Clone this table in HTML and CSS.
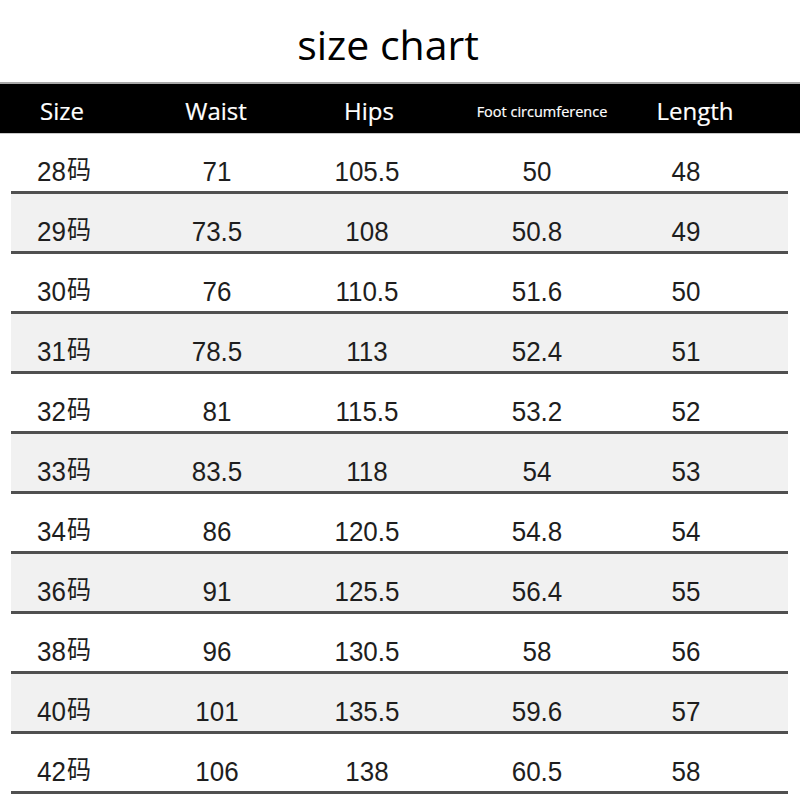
FILE: index.html
```html
<!DOCTYPE html>
<html>
<head>
<meta charset="utf-8">
<link rel="stylesheet" href="styles.css">
</head>
<body>
<div class="page">
  <h1 class="title">size chart</h1>
  <div class="head">
    <div class="hc first">Size</div>
    <div class="hc">Waist</div>
    <div class="hc">Hips</div>
    <div class="hc small">Foot circumference</div>
    <div class="hc">Length</div>
  </div>
  <div class="rows">
    <div class="row"><div class="c first">28<span class="ma">码</span></div><div class="c">71</div><div class="c">105.5</div><div class="c">50</div><div class="c">48</div></div>
    <div class="row alt"><div class="c first">29<span class="ma">码</span></div><div class="c">73.5</div><div class="c">108</div><div class="c">50.8</div><div class="c">49</div></div>
    <div class="row"><div class="c first">30<span class="ma">码</span></div><div class="c">76</div><div class="c">110.5</div><div class="c">51.6</div><div class="c">50</div></div>
    <div class="row alt"><div class="c first">31<span class="ma">码</span></div><div class="c">78.5</div><div class="c">113</div><div class="c">52.4</div><div class="c">51</div></div>
    <div class="row"><div class="c first">32<span class="ma">码</span></div><div class="c">81</div><div class="c">115.5</div><div class="c">53.2</div><div class="c">52</div></div>
    <div class="row alt"><div class="c first">33<span class="ma">码</span></div><div class="c">83.5</div><div class="c">118</div><div class="c">54</div><div class="c">53</div></div>
    <div class="row"><div class="c first">34<span class="ma">码</span></div><div class="c">86</div><div class="c">120.5</div><div class="c">54.8</div><div class="c">54</div></div>
    <div class="row alt"><div class="c first">36<span class="ma">码</span></div><div class="c">91</div><div class="c">125.5</div><div class="c">56.4</div><div class="c">55</div></div>
    <div class="row"><div class="c first">38<span class="ma">码</span></div><div class="c">96</div><div class="c">130.5</div><div class="c">58</div><div class="c">56</div></div>
    <div class="row alt"><div class="c first">40<span class="ma">码</span></div><div class="c">101</div><div class="c">135.5</div><div class="c">59.6</div><div class="c">57</div></div>
    <div class="row"><div class="c first">42<span class="ma">码</span></div><div class="c">106</div><div class="c">138</div><div class="c">60.5</div><div class="c">58</div></div>
  </div>
</div>
</body>
</html>
```

FILE: styles.css
```css
html, body {
  margin: 0;
  padding: 0;
  background: #ffffff;
}

.page {
  width: 800px;
  height: 800px;
  overflow: hidden;
  display: flex;
  flex-direction: column;
}

.title {
  margin: 0;
  height: 82px;
  box-sizing: border-box;
  padding: 16px 24px 0 0;
  text-align: center;
  font-family: "Open Sans", "Noto Sans", sans-serif;
  font-weight: 400;
  font-size: 41px;
  line-height: 56px;
  color: #000;
}

.head {
  height: 52px;
  box-sizing: border-box;
  background: #000;
  border-top: 2px solid #a8a8a8;
  border-bottom: 1px solid #c8c8c8;
  display: grid;
  grid-template-columns: 131px 148px 158px 188px 118px 1fr;
  padding-left: 11px;
  align-items: center;
  font-family: "Open Sans", "Noto Sans", sans-serif;
  color: #fff;
}

.hc {
  font-size: 24px;
  text-align: center;
  padding-top: 4px;
  -webkit-text-stroke: 0.2px #fff;
}

.hc.first {
  text-align: left;
  padding-left: 29px;
}

.hc.small {
  font-size: 14.5px;
  padding-top: 6px;
}

.rows {
  display: flex;
  flex-direction: column;
  padding: 0 12px 0 11px;
}

.row {
  height: 60px;
  box-sizing: border-box;
  border-bottom: 3px solid #505050;
  display: grid;
  grid-template-columns: 131px 150px 150px 190px 108px 1fr;
  align-items: center;
  padding-top: 16px;
  font-family: "Liberation Sans", "Noto Sans CJK SC", sans-serif;
  font-size: 26px;
  line-height: 30px;
  color: #1e1e1e;
}

.row.alt {
  background: #f1f1f1;
}

.c {
  text-align: center;
  transform: scaleY(1.08);
}

.c.first {
  text-align: left;
  padding-left: 26px;
}

.ma {
  font-family: "Noto Sans CJK SC", sans-serif;
  font-size: 24px;
  line-height: 20px;
  vertical-align: 2px;
  margin-left: 1px;
}
```
